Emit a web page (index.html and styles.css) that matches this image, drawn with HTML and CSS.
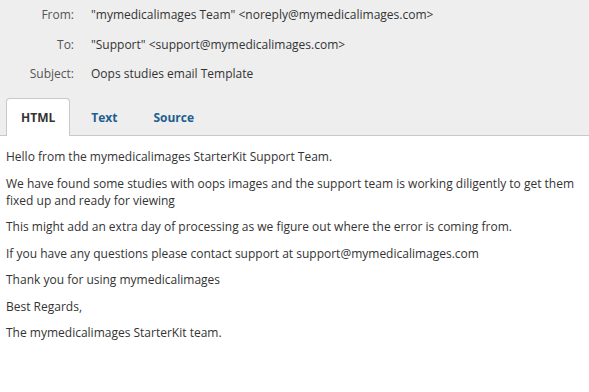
FILE: index.html
```html
<!DOCTYPE html>
<html lang="en">
<head>
  <meta charset="UTF-8">
  <title>Email Preview</title>
  <link rel="stylesheet" href="styles.css">
</head>
<body>
  <div class="mail-header">
    <div class="field">
      <span class="label">From:</span>
      <span class="value">"mymedicalimages Team" &lt;noreply@mymedicalimages.com&gt;</span>
    </div>
    <div class="field">
      <span class="label">To:</span>
      <span class="value">"Support" &lt;support@mymedicalimages.com&gt;</span>
    </div>
    <div class="field">
      <span class="label">Subject:</span>
      <span class="value">Oops studies email Template</span>
    </div>
    <ul class="tabs">
      <li class="tab active">HTML</li>
      <li class="tab">Text</li>
      <li class="tab">Source</li>
    </ul>
  </div>
  <div class="mail-body">
    <p>Hello from the mymedicalimages StarterKit Support Team.</p>
    <p>We have found some studies with oops images and the support team is working diligently to get them fixed up and ready for viewing</p>
    <p>This might add an extra day of processing as we figure out where the error is coming from.</p>
    <p>If you have any questions please contact support at support@mymedicalimages.com</p>
    <p>Thank you for using mymedicalimages</p>
    <p>Best Regards,</p>
    <p>The mymedicalimages StarterKit team.</p>
  </div>
</body>
</html>
```
FILE: styles.css
```css
body {
  margin: 0;
  font-family: "Open Sans", "Noto Sans", sans-serif;
  font-size: 12px;
  color: #333;
  background-color: #fff;
}
.mail-header {
  background-color: #eee;
  border-bottom: 1px solid #c8c8c8;
  padding-top: 6px;
}
.field {
  display: flex;
  height: 29.5px;
  line-height: 18px;
}
.label {
  width: 74px;
  text-align: right;
  color: #555;
}
.value {
  margin-left: 17px;
}
.tabs {
  display: flex;
  list-style: none;
  margin: 3.5px 0 -1px 6px;
  padding: 0;
}
.tab {
  padding: 10px 14px 8px;
  font-weight: bold;
  color: #1d5f8f;
  line-height: 18px;
  border: 1px solid transparent;
  border-bottom: none;
  margin-right: 6px;
}
.tab.active {
  color: #333;
  background-color: #fff;
  border-color: #c8c8c8;
  border-radius: 4px 4px 0 0;
  padding-bottom: 9px;
}
.mail-body {
  padding: 12px 6px 8px;
}
.mail-body p {
  margin: 0 0 9.5px;
  line-height: 17px;
}
```
